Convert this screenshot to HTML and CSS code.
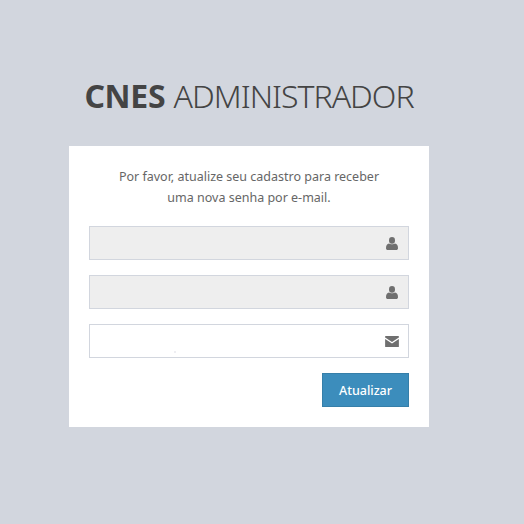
FILE: index.html
```html
<!DOCTYPE html>
<html lang="en">

<head>
    <meta charset="UTF-8">
    <meta name="viewport" content="width=device-width, initial-scale=1.0">
    <title>CNES Administrador</title>
    <link rel="stylesheet" href="styles.css">
</head>

<body>
    <div class="login-box">
        <h1 class="login-logo"><b>CNES</b> ADMINISTRADOR</h1>

        <form class="login-body">
            <p class="login-msg">Por favor, atualize seu cadastro para receber<br>uma nova senha por e-mail.</p>

            <div class="field field-disabled">
                <svg class="icon icon-user" viewBox="0 0 12 13">
                    <ellipse cx="6" cy="3.4" rx="3" ry="3.3" />
                    <path d="M0 11.2C0 8.6 1 7 3 6.6 4 7.6 8 7.6 9 6.6 11 7 12 8.6 12 11.2 12 12.4 11.2 13 10.2 13H1.8C.8 13 0 12.4 0 11.2Z" />
                </svg>
            </div>

            <div class="field field-disabled">
                <svg class="icon icon-user" viewBox="0 0 12 13">
                    <ellipse cx="6" cy="3.4" rx="3" ry="3.3" />
                    <path d="M0 11.2C0 8.6 1 7 3 6.6 4 7.6 8 7.6 9 6.6 11 7 12 8.6 12 11.2 12 12.4 11.2 13 10.2 13H1.8C.8 13 0 12.4 0 11.2Z" />
                </svg>
            </div>

            <div class="field">
                <span class="speck"></span>
                <svg class="icon icon-mail" viewBox="0 0 15 12">
                    <path d="M.6 0H14.4C14.8 0 15 .2 15 .6V1.7L7.5 6.6 0 1.7V.6C0 .2.2 0 .6 0Z" />
                    <path d="M0 3.2 7.5 8.1 15 3.2V11.4C15 11.8 14.8 12 14.4 12H.6C.2 12 0 11.8 0 11.4Z" />
                </svg>
            </div>

            <div class="actions">
                <button type="button" class="btn-update">Atualizar</button>
            </div>
        </form>
    </div>
</body>

</html>
```

FILE: styles.css
```css
* {
    box-sizing: border-box;
    margin: 0;
    padding: 0;
}

body {
    font-family: "Source Sans Pro", "Noto Sans", "Open Sans", sans-serif;
    background-color: #d2d6de;
    min-height: 100vh;
}

.login-box {
    width: 360px;
    margin-left: 69px;
    padding-top: 73px;
}

.login-logo {
    height: 73px;
    font-size: 32px;
    font-weight: 300;
    line-height: 46px;
    letter-spacing: -1px;
    word-spacing: 1px;
    text-align: center;
    white-space: nowrap;
    color: #444;
}

.login-logo b {
    font-weight: 700;
    letter-spacing: -0.3px;
}

.login-body {
    height: 281px;
    padding: 20px;
    background-color: #fff;
    color: #666;
}

.login-msg {
    height: 60px;
    font-size: 12.5px;
    line-height: 21px;
    text-align: center;
}

.field {
    position: relative;
    display: flex;
    justify-content: flex-end;
    align-items: center;
    height: 34px;
    margin-bottom: 15px;
    padding-right: 10px;
    border: 1px solid #d2d6de;
    background-color: #fff;
}

.field-disabled {
    background-color: #eee;
}

.icon {
    display: block;
    fill: #6f6f6f;
}

.icon-user {
    width: 12px;
    height: 13px;
}

.icon-mail {
    width: 14px;
    height: 11px;
    margin-right: -1px;
}

.speck {
    position: absolute;
    left: 84px;
    top: 26px;
    width: 2px;
    height: 2px;
    background-color: #eeeef2;
}

.actions {
    display: flex;
    justify-content: flex-end;
}

.btn-update {
    width: 87px;
    height: 34px;
    border: 1px solid #367fa9;
    background-color: #3c8dbc;
    color: #fff;
    font-family: inherit;
    font-size: 12.5px;
    font-weight: 500;
}
```
